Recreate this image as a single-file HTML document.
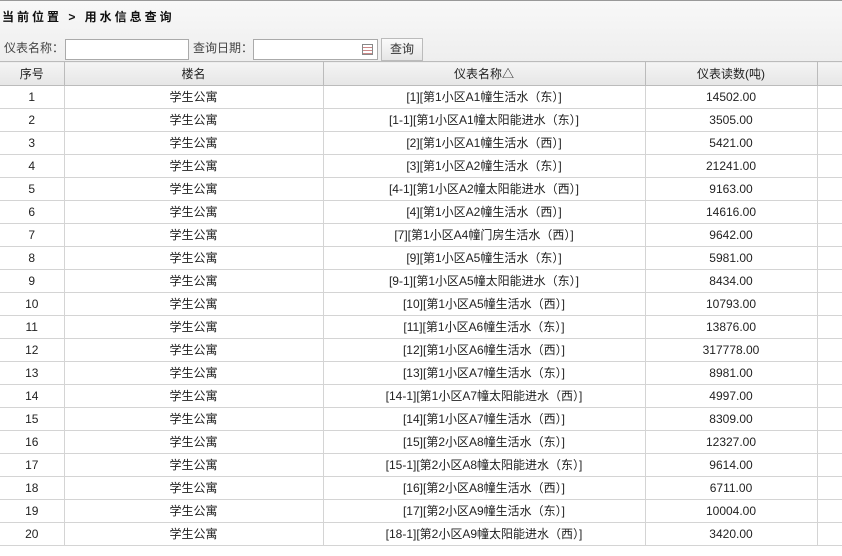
<!DOCTYPE html>
<html><head><meta charset="utf-8"><style>
*{margin:0;padding:0;box-sizing:border-box}
body{width:842px;height:556px;overflow:hidden;background:#fff;font-family:"Liberation Sans","Noto Sans CJK SC",sans-serif;font-size:12px;color:#222}
.top{position:absolute;left:0;top:0;width:842px;height:62px;background:linear-gradient(#f8f8f8,#eeeeee);border-top:1px solid #999}
.title{position:absolute;left:2px;top:7px;font-weight:bold;font-size:12px;letter-spacing:3px;color:#111}
.lbl{position:absolute;top:38px;color:#444}
.inp{position:absolute;top:38px;height:21px;background:#fff;border:1px solid #aaa}
.cal{position:absolute;right:4px;top:4px;width:11px;height:11px;border:1px solid #888;background:repeating-linear-gradient(#fff 0 2px,#c88 2px 3px)}
.btn{position:absolute;left:381px;top:37px;width:42px;height:23px;border:1px solid #bbb;background:linear-gradient(#fafafa,#e6e6e6);text-align:center;line-height:21px;color:#333}
table{position:absolute;left:0;top:61px;border-collapse:collapse;table-layout:fixed;width:842px}
td,th{border:1px solid #d4d4d4;border-top:none;text-align:center;font-weight:normal;height:23px;white-space:nowrap;overflow:hidden;font-size:12px}
td{line-height:21px}
th{background:linear-gradient(#f4f4f4,#e6e6e6);border-top:1px solid #aaa;border-bottom:1px solid #aaa;border-color:#bbb;height:24px;color:#222}
td:last-child,th:last-child{border-right:none}
td:first-child,th:first-child{border-left:none}
</style></head><body>
<div class="top">
<div class="title">当前位置 &gt; 用水信息查询</div>
<div class="lbl" style="left:4px">仪表名称：</div>
<div class="inp" style="left:65px;width:124px"></div>
<div class="lbl" style="left:193px">查询日期：</div>
<div class="inp" style="left:253px;width:125px"><div class="cal"></div></div>
<div class="btn">查询</div>
</div>
<table>
<colgroup><col style="width:64px"><col style="width:259px"><col style="width:322px"><col style="width:172px"><col></colgroup>
<tr><th>序号</th><th>楼名</th><th>仪表名称&#9651;</th><th>仪表读数(吨)</th><th></th></tr>
<tr><td>1</td><td>学生公寓</td><td>[1][第1小区A1幢生活水（东）]</td><td>14502.00</td><td></td></tr>
<tr><td>2</td><td>学生公寓</td><td>[1-1][第1小区A1幢太阳能进水（东）]</td><td>3505.00</td><td></td></tr>
<tr><td>3</td><td>学生公寓</td><td>[2][第1小区A1幢生活水（西）]</td><td>5421.00</td><td></td></tr>
<tr><td>4</td><td>学生公寓</td><td>[3][第1小区A2幢生活水（东）]</td><td>21241.00</td><td></td></tr>
<tr><td>5</td><td>学生公寓</td><td>[4-1][第1小区A2幢太阳能进水（西）]</td><td>9163.00</td><td></td></tr>
<tr><td>6</td><td>学生公寓</td><td>[4][第1小区A2幢生活水（西）]</td><td>14616.00</td><td></td></tr>
<tr><td>7</td><td>学生公寓</td><td>[7][第1小区A4幢门房生活水（西）]</td><td>9642.00</td><td></td></tr>
<tr><td>8</td><td>学生公寓</td><td>[9][第1小区A5幢生活水（东）]</td><td>5981.00</td><td></td></tr>
<tr><td>9</td><td>学生公寓</td><td>[9-1][第1小区A5幢太阳能进水（东）]</td><td>8434.00</td><td></td></tr>
<tr><td>10</td><td>学生公寓</td><td>[10][第1小区A5幢生活水（西）]</td><td>10793.00</td><td></td></tr>
<tr><td>11</td><td>学生公寓</td><td>[11][第1小区A6幢生活水（东）]</td><td>13876.00</td><td></td></tr>
<tr><td>12</td><td>学生公寓</td><td>[12][第1小区A6幢生活水（西）]</td><td>317778.00</td><td></td></tr>
<tr><td>13</td><td>学生公寓</td><td>[13][第1小区A7幢生活水（东）]</td><td>8981.00</td><td></td></tr>
<tr><td>14</td><td>学生公寓</td><td>[14-1][第1小区A7幢太阳能进水（西）]</td><td>4997.00</td><td></td></tr>
<tr><td>15</td><td>学生公寓</td><td>[14][第1小区A7幢生活水（西）]</td><td>8309.00</td><td></td></tr>
<tr><td>16</td><td>学生公寓</td><td>[15][第2小区A8幢生活水（东）]</td><td>12327.00</td><td></td></tr>
<tr><td>17</td><td>学生公寓</td><td>[15-1][第2小区A8幢太阳能进水（东）]</td><td>9614.00</td><td></td></tr>
<tr><td>18</td><td>学生公寓</td><td>[16][第2小区A8幢生活水（西）]</td><td>6711.00</td><td></td></tr>
<tr><td>19</td><td>学生公寓</td><td>[17][第2小区A9幢生活水（东）]</td><td>10004.00</td><td></td></tr>
<tr><td>20</td><td>学生公寓</td><td>[18-1][第2小区A9幢太阳能进水（西）]</td><td>3420.00</td><td></td></tr>
</table>
</body></html>
